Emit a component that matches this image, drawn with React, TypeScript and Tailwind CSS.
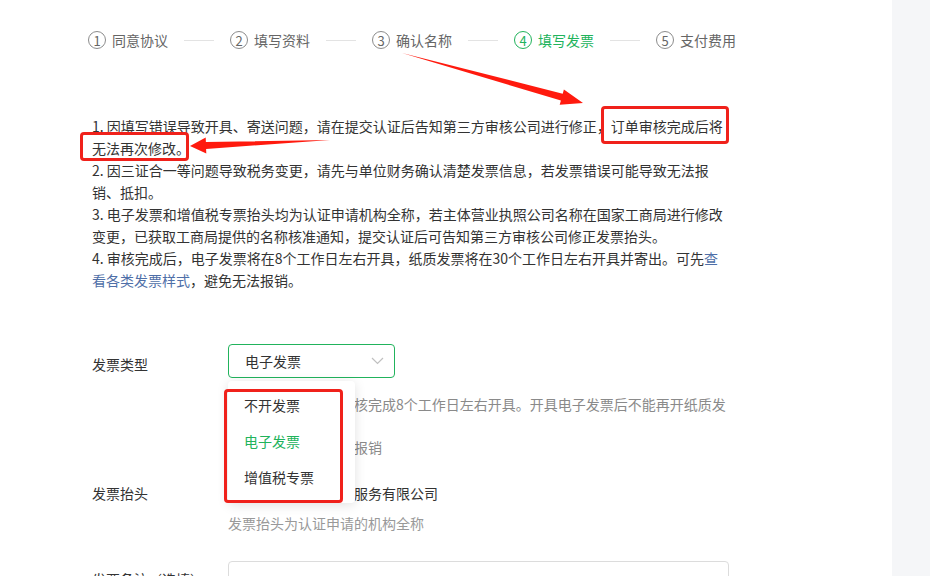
import React from "react";

const steps = ["同意协议", "填写资料", "确认名称", "填写发票", "支付费用"];

function Steps() {
  return (
    <div className="flex items-center pt-[30px] pl-[88px]">
      {steps.map((s, i) => {
        const active = i === 3;
        return (
          <div key={s} className="flex items-center">
            <div
              className={
                active
                  ? "flex h-[18px] w-[18px] items-center justify-center rounded-full border border-[#21b35c] text-[13px] leading-none text-[#21b35c]"
                  : "flex h-[18px] w-[18px] items-center justify-center rounded-full border border-[#8c8c8c] text-[13px] leading-none text-[#666]"
              }
            >
              {i + 1}
            </div>
            <div
              className={
                active
                  ? "ml-[6px] text-[14px] leading-[20px] text-[#21b35c]"
                  : "ml-[6px] text-[14px] leading-[20px] text-[#666]"
              }
            >
              {s}
            </div>
            {i < steps.length - 1 && <div className="mx-[16px] h-px w-[30px] bg-[#e3e3e3]" />}
          </div>
        );
      })}
    </div>
  );
}

function Arrows() {
  return (
    <svg className="pointer-events-none absolute left-0 top-0" width="892" height="576">
      <polygon
        points="402,53 562.7,93.7 563.9,89.4 583,103 559.7,104.8 560.9,100.5"
        fill="#ff1a0e"
      />
      <polygon
        points="330,140 205.9,141.9 205.7,137.4 190,146 206.3,153.4 206.1,148.9"
        fill="#ff1a0e"
      />
    </svg>
  );
}

export default function App() {
  return (
    <div className="flex h-[576px] w-[930px] overflow-hidden bg-white font-['Noto_Sans_CJK_SC',sans-serif]">
      <div className="relative w-[892px] shrink-0 bg-white">
        <Steps />

        <div className="ml-[92px] mt-[65px] w-[638px] text-[14px] leading-[22px] text-[#333]">
          <div>1. 因填写错误导致开具、寄送问题，请在提交认证后告知第三方审核公司进行修正，订单审核完成后将无法再次修改。</div>
          <div>2. 因三证合一等问题导致税务变更，请先与单位财务确认清楚发票信息，若发票错误可能导致无法报销、抵扣。</div>
          <div>3. 电子发票和增值税专票抬头均为认证申请机构全称，若主体营业执照公司名称在国家工商局进行修改变更，已获取工商局提供的名称核准通知，提交认证后可告知第三方审核公司修正发票抬头。</div>
          <div>
            4. 审核完成后，电子发票将在8个工作日左右开具，纸质发票将在30个工作日左右开具并寄出。可先
            <span className="text-[#4f6fa8]">查看各类发票样式</span>，避免无法报销。
          </div>
        </div>

        {/* Row 1: invoice type */}
        <div className="mt-[53px] flex pl-[92px]">
          <div className="mt-[9px] w-[136px] shrink-0 text-[14px] leading-[22px] text-[#333]">发票类型</div>
          <div className="relative">
            <div className="flex h-[34px] w-[167px] items-center justify-between rounded-[4px] border border-[#21b35c] pl-[16px] pr-[10px]">
              <span className="text-[14px] leading-[20px] text-[#333]">电子发票</span>
              <svg width="13" height="8" viewBox="0 0 13 8">
                <polyline points="1,1 6.5,6.5 12,1" fill="none" stroke="#c0c0c0" strokeWidth="1.2" />
              </svg>
            </div>
            <div className="mt-[16px] w-[504px] text-[14px] leading-[21.5px] text-[#8a8a8a]">
              电子发票将在订单审核完成8个工作日左右开具。开具电子发票后不能再开纸质发票。
              <br />
              电子发票同样可正常报销
            </div>

            {/* dropdown */}
            <div className="absolute left-0 top-[37px] z-10 w-[127px] rounded-[4px] bg-white pb-[8px] pt-[6px] shadow-[0_2px_12px_rgba(0,0,0,0.12)]">
              <div className="flex h-[36px] items-center pl-[16px] text-[14px] text-[#333]">不开发票</div>
              <div className="flex h-[36px] items-center pl-[16px] text-[14px] text-[#21b35c]">电子发票</div>
              <div className="flex h-[36px] items-center pl-[16px] text-[14px] text-[#333]">增值税专票</div>
            </div>
          </div>
        </div>

        {/* Row 2: invoice title */}
        <div className="mt-[23px] flex pl-[92px]">
          <div className="w-[136px] shrink-0 text-[14px] leading-[22px] text-[#333]">发票抬头</div>
          <div>
            <div className="text-[14px] leading-[22px] text-[#333]">上海市某某信息技术服务有限公司</div>
            <div className="mt-[8px] text-[14px] leading-[22px] text-[#999]">发票抬头为认证申请的机构全称</div>
          </div>
        </div>

        {/* Row 3: remark */}
        <div className="mt-[27px] flex pl-[92px]">
          <div className="mt-[7px] w-[136px] shrink-0 text-[14px] leading-[22px] text-[#333]">发票备注（选填）</div>
          <div className="flex h-[34px] w-[501px] items-end justify-end rounded-[4px] border border-[#dcdcdc] pb-[4px] pr-[12px]">
            <span className="text-[13px] leading-[18px] text-[#b5b5b5]">0/200</span>
          </div>
        </div>

        {/* annotations */}
        <div className="pointer-events-none absolute left-[601px] top-[106px] z-20 h-[38px] w-[128px] rounded-[4px] border-[3px] border-[#f0211b]" />
        <div className="pointer-events-none absolute left-[80px] top-[132px] z-20 h-[29px] w-[109px] rounded-[4px] border-[3px] border-[#f0211b]" />
        <div className="pointer-events-none absolute left-[224px] top-[389px] z-20 h-[114px] w-[119px] rounded-[4px] border-[3px] border-[#f0211b]" />
        <div className="z-20">
          <Arrows />
        </div>
      </div>
      <div className="flex-1 bg-[#f5f6f8]" />
    </div>
  );
}
